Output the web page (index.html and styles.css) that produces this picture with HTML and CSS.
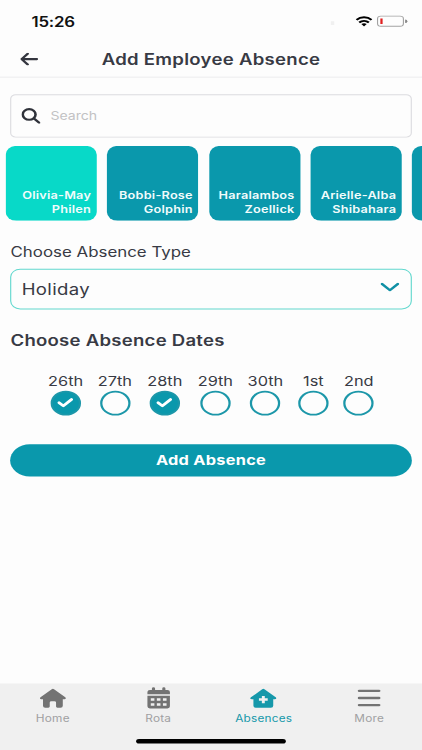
FILE: index.html
```html
<!DOCTYPE html>
<html lang="en">
<head>
  <meta charset="UTF-8" />
  <meta name="viewport" content="width=device-width, initial-scale=1.0"/>
  <title>Add Employee Absence</title>
  <link rel="stylesheet" href="styles.css">
</head>
<body>
  <div class="screen">

    <!-- Status bar -->
    <div class="status-bar">
      <span class="time">15:26</span>
      <div class="status-icons">
        <span class="signal"></span>
        <svg width="15" height="12" viewBox="0 0 15 12" fill="none" stroke="#000" stroke-width="2.1">
          <path d="M.8 4.5C4.6.7 10.4.7 14.2 4.5"/>
          <path d="M3.2 7.3c2.5-2.3 6.1-2.3 8.6 0"/>
          <path d="M5.1 9.1Q7.5 7.2 9.9 9.1L7.5 11.7z" fill="#000" stroke="none"/>
        </svg>
        <div class="battery"><span class="battery-level"></span></div>
      </div>
    </div>

    <header class="header">
      <button class="back-btn" aria-label="Back">
        <svg width="16" height="14" viewBox="0 0 16 14" fill="none" stroke="#34363f" stroke-width="2.2" stroke-linecap="round" stroke-linejoin="round">
          <path d="M14.8 7H1.2M6.6 1.2L1.2 7L6.6 12.8"/>
        </svg>
      </button>
      <h1>Add Employee Absence</h1>
    </header>

    <main class="content">
      <div class="search">
        <svg width="17" height="17" viewBox="0 0 17 17" fill="none" stroke="#2f323a" stroke-width="2.3" stroke-linecap="round">
          <circle cx="6.9" cy="6.9" r="5.7"/>
          <path d="M11.2 11.2L15.8 15.8"/>
        </svg>
        <span>Search</span>
      </div>

      <div class="employees">
        <div class="employee selected">Olivia-May<br>Philen</div>
        <div class="employee">Bobbi-Rose<br>Golphin</div>
        <div class="employee">Haralambos<br>Zoellick</div>
        <div class="employee">Arielle-Alba<br>Shibahara</div>
        <div class="employee"></div>
      </div>

      <div class="type-label">Choose Absence Type</div>
      <div class="select">
        <span>Holiday</span>
        <svg width="17" height="10" viewBox="0 0 17 10" fill="none" stroke="#1190a5" stroke-width="2.4" stroke-linecap="round" stroke-linejoin="round">
          <path d="M1.4 1.4L8.5 8.2L15.6 1.4"/>
        </svg>
      </div>

      <h2>Choose Absence Dates</h2>
      <div class="dates">
        <div class="date"><span>26th</span><div class="circle checked"><svg width="16" height="12" viewBox="0 0 16 12"><path d="M2.5 6L6.3 9.5L13.5 2.5"/></svg></div></div>
        <div class="date"><span>27th</span><div class="circle"></div></div>
        <div class="date"><span>28th</span><div class="circle checked"><svg width="16" height="12" viewBox="0 0 16 12"><path d="M2.5 6L6.3 9.5L13.5 2.5"/></svg></div></div>
        <div class="date"><span>29th</span><div class="circle"></div></div>
        <div class="date"><span>30th</span><div class="circle"></div></div>
        <div class="date"><span>1st</span><div class="circle"></div></div>
        <div class="date"><span>2nd</span><div class="circle"></div></div>
      </div>

      <button class="add-btn">Add Absence</button>
    </main>

    <nav class="tab-bar">
      <div class="tab">
        <svg width="24" height="22" viewBox="0 0 24 22" fill="currentColor">
          <path d="M11 1.3a1.5 1.5 0 0 1 2 0L23 10c1 .9.5 2-.7 2h-1.5v7.2a2 2 0 0 1-2 2H16a1.2 1.2 0 0 1-1.2-1.2v-4.3a1.5 1.5 0 0 0-1.5-1.5h-2.6a1.5 1.5 0 0 0-1.5 1.5V20A1.2 1.2 0 0 1 8 21.2H5.2a2 2 0 0 1-2-2V12H1.7C.5 12 0 10.9 1 10z"/>
        </svg>
        <span>Home</span>
      </div>
      <div class="tab">
        <svg width="22" height="24" viewBox="0 0 22 24" fill="currentColor">
          <path d="M5 1.5a1.4 1.4 0 0 1 2.8 0V3h6.4V1.5a1.4 1.4 0 0 1 2.8 0V3h1.8A2.2 2.2 0 0 1 21 5.2V7.8H1V5.2A2.2 2.2 0 0 1 3.2 3H5z"/>
          <path fill-rule="evenodd" d="M1 9.2h20v11.6a2.2 2.2 0 0 1-2.2 2.2H3.2A2.2 2.2 0 0 1 1 20.8zM4 12v2.8h3.2V12zM9.4 12v2.8h3.2V12zM14.8 12v2.8H18V12zM4 17.3v2.8h3.2v-2.8zM9.4 17.3v2.8h3.2v-2.8zM14.8 17.3v2.8H18v-2.8z"/>
        </svg>
        <span>Rota</span>
      </div>
      <div class="tab active">
        <svg width="24" height="22" viewBox="0 0 24 22" fill="currentColor">
          <path fill-rule="evenodd" d="M11 1.3a1.5 1.5 0 0 1 2 0L23 10c1 .9.5 2-.7 2h-1.5v7.2a2 2 0 0 1-2 2H5.2a2 2 0 0 1-2-2V12H1.7C.5 12 0 10.9 1 10zM10.7 8.5v2.6H8.1v2.6h2.6v2.6h2.6v-2.6h2.6v-2.6h-2.6V8.5z"/>
        </svg>
        <span>Absences</span>
      </div>
      <div class="tab">
        <svg width="22" height="20" viewBox="0 0 22 20" fill="none" stroke="currentColor" stroke-width="2.6" stroke-linecap="round">
          <path d="M2.2 2H19.8M2.2 9.7H19.8M2.2 17.4H19.8"/>
        </svg>
        <span>More</span>
      </div>
      <div class="home-indicator"></div>
    </nav>

  </div>
</body>
</html>
```
FILE: styles.css
```css
* {
  box-sizing: border-box;
}

html {
  overflow: hidden;
}

body {
  margin: 0;
  height: 750px;
  overflow: hidden;
  background-color: #fdfdfd;
  font-family: Inter, "Liberation Sans", sans-serif;
  color: #383a44;
}

.screen {
  width: 375px;
  height: 812px;
  margin-bottom: -62px;
  display: flex;
  flex-direction: column;
  overflow: hidden;
  background-color: #fdfdfd;
  transform: scale(1.1253, 0.9236);
  transform-origin: 0 0;
}

button {
  border: none;
  padding: 0;
  background: none;
  font-family: inherit;
}

svg {
  display: block;
}

.status-bar {
  height: 44px;
  flex-shrink: 0;
  padding: 2px 14px 0 28px;
  display: flex;
  justify-content: space-between;
  align-items: center;
}

.time {
  font-size: 15px;
  font-weight: 600;
  letter-spacing: -0.2px;
  color: #111;
}

.status-icons {
  display: flex;
  align-items: center;
  gap: 4px;
}

.signal {
  width: 3px;
  height: 4px;
  margin: 3px 15px 0 0;
  background-color: #f0f0f0;
}

.battery {
  position: relative;
  width: 24px;
  height: 11.5px;
  margin-right: 2px;
  padding: 1.5px;
  border: 1px solid #a2a2a2;
  border-radius: 3.5px;
}

.battery::after {
  content: "";
  position: absolute;
  right: -3.5px;
  top: 3px;
  width: 1.5px;
  height: 3.5px;
  border-radius: 0 2px 2px 0;
  background-color: #888;
}

.battery-level {
  display: block;
  width: 2px;
  height: 6.5px;
  background-color: #e02020;
}

.header {
  height: 40px;
  flex-shrink: 0;
  padding: 0 18px;
  display: grid;
  grid-template-columns: 16px 1fr 16px;
  align-items: center;
  border-bottom: 1px solid #ebebed;
}

h1 {
  margin: 0;
  font-size: 16.5px;
  font-weight: 600;
  letter-spacing: 0.25px;
  text-align: center;
  white-space: nowrap;
}

.content {
  flex: 1;
  padding: 18px 9.3px 0;
}

.search {
  height: 47px;
  padding-left: 9px;
  display: flex;
  align-items: center;
  gap: 8.5px;
  border: 1px solid #dcdce0;
  border-radius: 5px;
  font-size: 12.5px;
  color: #c2c2c4;
}

.employees {
  display: flex;
  gap: 9.2px;
  margin: 9px -10px 0 -4.5px;
  overflow: hidden;
}

.employee {
  width: 81.2px;
  height: 81px;
  flex-shrink: 0;
  padding: 0 5px 4px 0;
  display: flex;
  align-items: flex-end;
  justify-content: flex-end;
  border-radius: 9.5px;
  background-color: #0a98ac;
  color: #f2fcfc;
  font-size: 11.3px;
  font-weight: 600;
  line-height: 15.5px;
  letter-spacing: 0.2px;
  text-align: right;
}

.employee.selected {
  background-color: #08d9c8;
}

.type-label {
  margin-top: 22.5px;
  font-size: 15px;
  line-height: 22px;
}

.select {
  height: 44px;
  margin-top: 7px;
  padding: 0 10px 0 9px;
  display: flex;
  align-items: center;
  justify-content: space-between;
  border: 1.3px solid #62d8ce;
  border-radius: 9px;
  font-size: 16.5px;
  letter-spacing: 0.3px;
}

.select svg {
  margin-bottom: 3px;
}

h2 {
  margin: 22px 0 0;
  font-size: 16.5px;
  font-weight: 600;
  line-height: 24px;
  letter-spacing: 0.22px;
}

.dates {
  margin: 22px 0 0 27px;
  display: grid;
  grid-template-columns: 44px 43.6px 45.2px 44.6px 44.4px 40.8px 40px;
}

.date {
  display: flex;
  flex-direction: column;
  align-items: center;
  font-size: 14.5px;
  line-height: 20px;
}

.circle {
  width: 27px;
  height: 27px;
  display: flex;
  align-items: center;
  justify-content: center;
  border: 2px solid #1c97a9;
  border-radius: 50%;
}

.circle.checked {
  background-color: #0a98ac;
}

.circle path {
  fill: none;
  stroke: #fff;
  stroke-width: 2.8;
  stroke-linecap: round;
  stroke-linejoin: round;
}

.add-btn {
  width: 100%;
  height: 35px;
  margin-top: 31.5px;
  display: block;
  border-radius: 18px;
  background-color: #0a98ac;
  color: #fff;
  font-size: 14.5px;
  font-weight: 700;
  letter-spacing: 0.25px;
}

.tab-bar {
  position: relative;
  height: 72px;
  flex-shrink: 0;
  display: grid;
  grid-template-columns: repeat(4, 1fr);
  background-color: #f0f0f0;
}

.tab {
  padding-top: 1px;
  display: flex;
  flex-direction: column;
  align-items: center;
  color: #737373;
}

.tab svg {
  height: 30px;
}

.tab span {
  font-size: 10.5px;
  line-height: 15px;
  letter-spacing: 0.2px;
  color: #a0a0a2;
}

.tab.active,
.tab.active span {
  color: #1698aa;
}

.home-indicator {
  position: absolute;
  left: 121px;
  bottom: 7.5px;
  width: 133px;
  height: 4.5px;
  border-radius: 3px;
  background-color: #000;
}
```
